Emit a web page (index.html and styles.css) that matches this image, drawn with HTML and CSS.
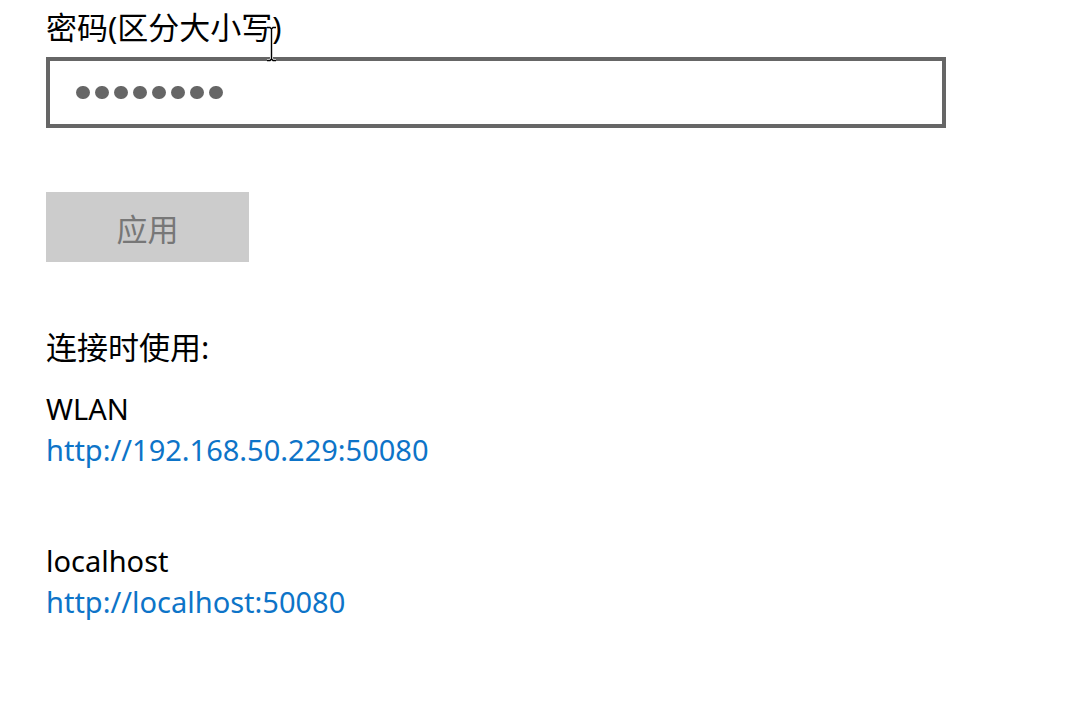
FILE: index.html
```html
<!DOCTYPE html>
<html lang="zh-CN">
<head>
  <meta charset="UTF-8" />
  <title>设置</title>
  <link rel="stylesheet" href="styles.css">
</head>
<body>
  <div class="page">
    <label class="field-label">密码(区分大小写)</label>
    <div class="password-box">
      <span class="dot"></span><span class="dot"></span><span class="dot"></span><span class="dot"></span>
      <span class="dot"></span><span class="dot"></span><span class="dot"></span><span class="dot"></span>
    </div>

    <button class="apply" disabled>应用</button>

    <p class="section-title">连接时使用:</p>

    <div class="conn">
      <div class="conn-name">WLAN</div>
      <a class="conn-link" href="#">http://192.168.50.229:50080</a>
    </div>

    <div class="conn conn-next">
      <div class="conn-name">localhost</div>
      <a class="conn-link" href="#">http://localhost:50080</a>
    </div>
  </div>

  <svg class="cursor" width="11" height="36" viewBox="0 0 11 36">
    <path d="M1 1.5 H4 L5.5 3 L7 1.5 H10 M5.5 3 V33 M1 34.5 H4 L5.5 33 L7 34.5 H10" fill="none" stroke="#fff" stroke-width="3"/>
    <path d="M1 1.5 H4 L5.5 3 L7 1.5 H10 M5.5 3 V33 M1 34.5 H4 L5.5 33 L7 34.5 H10" fill="none" stroke="#000" stroke-width="1.4"/>
  </svg>
</body>
</html>
```

FILE: styles.css
```css
body {
  margin: 0;
  background: #fff;
  font-family: 'Noto Sans', 'Noto Sans CJK SC', sans-serif;
  font-size: 29px;
  color: #000;
}
.page {
  padding: 7px 46px 0;
}
.field-label {
  display: block;
  font-size: 31px;
  line-height: 41px;
}
.password-box {
  box-sizing: border-box;
  margin-top: 9px;
  width: 900px;
  height: 71px;
  border: 4px solid #666;
  display: flex;
  align-items: center;
  gap: 5.5px;
  padding-left: 26px;
}
.dot {
  width: 13.5px;
  height: 13.5px;
  border-radius: 50%;
  background: #666;
}
.apply {
  display: block;
  margin-top: 64px;
  width: 203px;
  height: 70px;
  border: none;
  background: #ccc;
  color: #777;
  font-family: 'Noto Sans CJK SC', sans-serif;
  font-size: 31px;
  padding: 0;
}
.section-title {
  margin: 64px 0 0;
  font-size: 31px;
  line-height: 42px;
}
.conn {
  margin-top: 20px;
  line-height: 41px;
}
.conn-next {
  margin-top: 70px;
}
.conn-link {
  display: block;
  color: #0d74c8;
  text-decoration: none;
}
.cursor {
  position: absolute;
  left: 266px;
  top: 26px;
}
```
